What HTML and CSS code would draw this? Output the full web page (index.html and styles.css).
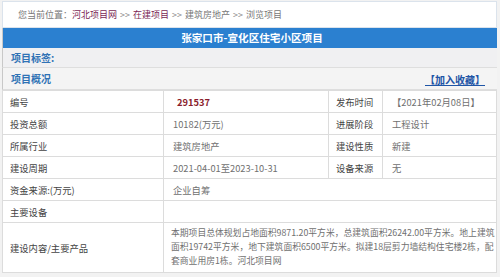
FILE: index.html
```html
<!DOCTYPE html>
<html lang="zh-CN">
<head>
<meta charset="utf-8">
<link rel="stylesheet" href="styles.css">
</head>
<body>
<div class="page">
  <div class="crumb">
    <span class="muted">您当前位置：</span><a class="link" href="#">河北项目网</a><span class="sep">&gt;&gt;</span><a class="link" href="#">在建项目</a><span class="sep">&gt;&gt;</span><span class="muted">建筑房地产</span><span class="sep">&gt;&gt;</span><span class="muted">浏览项目</span>
  </div>
  <div class="title">张家口市-宣化区住宅小区项目</div>
  <div class="section tags">项目标签:</div>
  <div class="section overview">
    <span>项目概况</span>
    <a class="fav" href="#">【加入收藏】</a>
  </div>
  <table class="info">
    <colgroup>
      <col class="c1"><col class="c2"><col class="c3"><col class="c4">
    </colgroup>
    <tr><td class="lbl">编号</td><td class="code">291537</td><td class="lbl">发布时间</td><td class="val">【2021年02月08日】</td></tr>
    <tr><td class="lbl">投资总额</td><td class="val">10182(万元)</td><td class="lbl">进展阶段</td><td class="val">工程设计</td></tr>
    <tr><td class="lbl">所属行业</td><td class="val">建筑房地产</td><td class="lbl">建设性质</td><td class="val">新建</td></tr>
    <tr><td class="lbl">建设周期</td><td class="val">2021-04-01至2023-10-31</td><td class="lbl">设备来源</td><td class="val">无</td></tr>
    <tr><td class="lbl">资金来源:(万元)</td><td class="val" colspan="3">企业自筹</td></tr>
    <tr><td class="lbl">主要设备</td><td class="val" colspan="3"></td></tr>
    <tr class="tall"><td class="lbl">建设内容/主要产品</td><td class="val desc" colspan="3">本期项目总体规划占地面积9871.20平方米，总建筑面积26242.00平方米。地上建筑<br>面积19742平方米，地下建筑面积6500平方米。拟建18层剪力墙结构住宅楼2栋，配<br>套商业用房1栋。河北项目网</td></tr>
  </table>
</div>
</body>
</html>
```
FILE: styles.css
```css
* { box-sizing: border-box; }
html, body { margin: 0; padding: 0; background: #ffffff; }
body {
  font-family: "Noto Sans CJK SC", "Noto Sans", sans-serif;
  font-size: 9.3px;
  color: #444;
}
.page {
  width: 500px;
  height: 277px;
  overflow: hidden;
  padding: 1px 3px 0 2px;
  background: #f2f2f2;
}
.crumb {
  height: 27px;
  line-height: 25px;
  background: #fff;
  border: 1px solid #dbe3ec;
  padding-left: 15px;
  color: #777;
  font-size: 9px;
  white-space: nowrap;
}
.link { color: #7a1f55; text-decoration: none; }
.sep { color: #888; margin: 0 3px; }
.title {
  height: 20px;
  line-height: 20px;
  background: #2b80d0;
  color: #fff;
  font-weight: bold;
  text-align: center;
  font-size: 10.6px;
  padding-left: 4px;
  border-left: 1px solid #c8c8c8;
}
.section {
  display: flex;
  justify-content: space-between;
  align-items: center;
  padding: 0 6px 0 8px;
  color: #2f72b5;
  font-weight: bold;
  font-size: 10px;
  border-left: 1px solid #c8c8c8;
  border-bottom: 1px solid #dedede;
}
.tags { height: 20px; background: #f0f0f2; }
.overview { height: 22px; background: #f4f4f4; }
.fav {
  color: #1e55a6;
  text-decoration: underline;
  margin-right: 6px;
  padding-top: 2px;
}
.info {
  width: 100%;
  border-collapse: collapse;
  background: #fff;
  table-layout: fixed;
}
.c1 { width: 161px; }
.c2 { width: 165px; }
.c3 { width: 54px; }
.info td {
  height: 22px;
  border: 1px solid #dcdcdc;
  padding: 0 7px;
  vertical-align: middle;
  white-space: nowrap;
}
.info td.lbl { color: #444; }
.info td.val { color: #707070; padding-left: 9px; }
.info td.code { color: #8a1c2c; font-weight: bold; padding-left: 13px; }
.info tr.tall td { height: 50px; }
.info td.desc {
  font-size: 8.8px;
  line-height: 14px;
  padding: 3px 2px 4px 7px;
}
```
